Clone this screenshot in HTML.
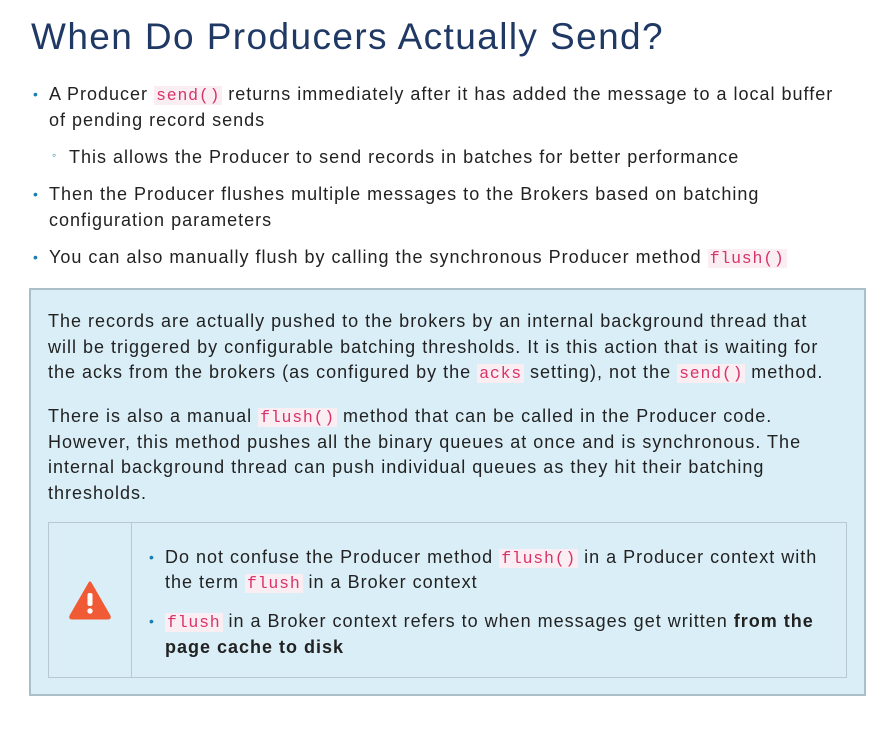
<!DOCTYPE html>
<html><head><meta charset="utf-8"><style>
*{margin:0;padding:0;box-sizing:border-box}
body{width:894px;height:749px;background:#fff;font-family:"Liberation Sans",sans-serif;color:#222;position:relative;overflow:hidden}
.t{position:absolute;left:31px;top:16px;font-size:37px;color:#1f3864;white-space:nowrap;letter-spacing:1.4px}
.l{position:absolute;white-space:nowrap;font-size:18px;line-height:26px;letter-spacing:1px}
code{font-family:"Liberation Mono",monospace;color:#d6336c;background:#fbeef2;font-size:16.5px;padding:0 2px;letter-spacing:0.8px}
.b{position:absolute;color:#1a7fb0;font-size:14px}
.box{position:absolute;left:29px;top:288px;width:837px;height:408px;background:#d9eef7;border:2px solid #a9bfc9}
.inner{position:absolute;left:48px;top:522px;width:799px;height:156px;border:1px solid #b9c9d1}
.div{position:absolute;left:131px;top:522px;width:1px;height:156px;background:#b9c9d1}
</style></head><body>
<div class="t">When Do Producers Actually Send?</div>
<div class="b" style="left:33px;top:86px">•</div>
<div class="l" style="left:49px;top:81px">A Producer <code>send()</code> returns immediately after it has added the message to a local buffer</div>
<div class="l" style="left:49px;top:107px">of pending record sends</div>
<div class="b" style="left:52px;top:148px;font-size:12px">◦</div>
<div class="l" style="left:69px;top:144px">This allows the Producer to send records in batches for better performance</div>
<div class="b" style="left:33px;top:186px">•</div>
<div class="l" style="left:49px;top:181px">Then the Producer flushes multiple messages to the Brokers based on batching</div>
<div class="l" style="left:49px;top:207px">configuration parameters</div>
<div class="b" style="left:33px;top:249px">•</div>
<div class="l" style="left:49px;top:244px">You can also manually flush by calling the synchronous Producer method <code>flush()</code></div>
<div class="box"></div>
<div class="l" style="left:48px;top:308px">The records are actually pushed to the brokers by an internal background thread that</div>
<div class="l" style="left:48px;top:334px">will be triggered by configurable batching thresholds. It is this action that is waiting for</div>
<div class="l" style="left:48px;top:359px">the acks from the brokers (as configured by the <code>acks</code> setting), not the <code>send()</code> method.</div>
<div class="l" style="left:48px;top:403px">There is also a manual <code>flush()</code> method that can be called in the Producer code.</div>
<div class="l" style="left:48px;top:429px">However, this method pushes all the binary queues at once and is synchronous. The</div>
<div class="l" style="left:48px;top:454px">internal background thread can push individual queues as they hit their batching</div>
<div class="l" style="left:48px;top:480px">thresholds.</div>
<div class="inner"></div><div class="div"></div>
<svg style="position:absolute;left:68px;top:580px" width="44" height="40" viewBox="0 0 44 40"><path d="M22 3 L41 36 Q42 38 40 38 L4 38 Q2 38 3 36 Z" fill="#f05a35" stroke="#f05a35" stroke-width="3" stroke-linejoin="round"/><rect x="19.5" y="13" width="5" height="13" rx="2" fill="#fff"/><circle cx="22" cy="31" r="2.7" fill="#fff"/></svg>
<div class="b" style="left:149px;top:549px">•</div>
<div class="l" style="left:165px;top:544px">Do not confuse the Producer method <code>flush()</code> in a Producer context with</div>
<div class="l" style="left:165px;top:569px">the term <code>flush</code> in a Broker context</div>
<div class="b" style="left:149px;top:613px">•</div>
<div class="l" style="left:165px;top:608px"><code>flush</code> in a Broker context refers to when messages get written <b>from the</b></div>
<div class="l" style="left:165px;top:634px"><b>page cache to disk</b></div>
</body></html>
